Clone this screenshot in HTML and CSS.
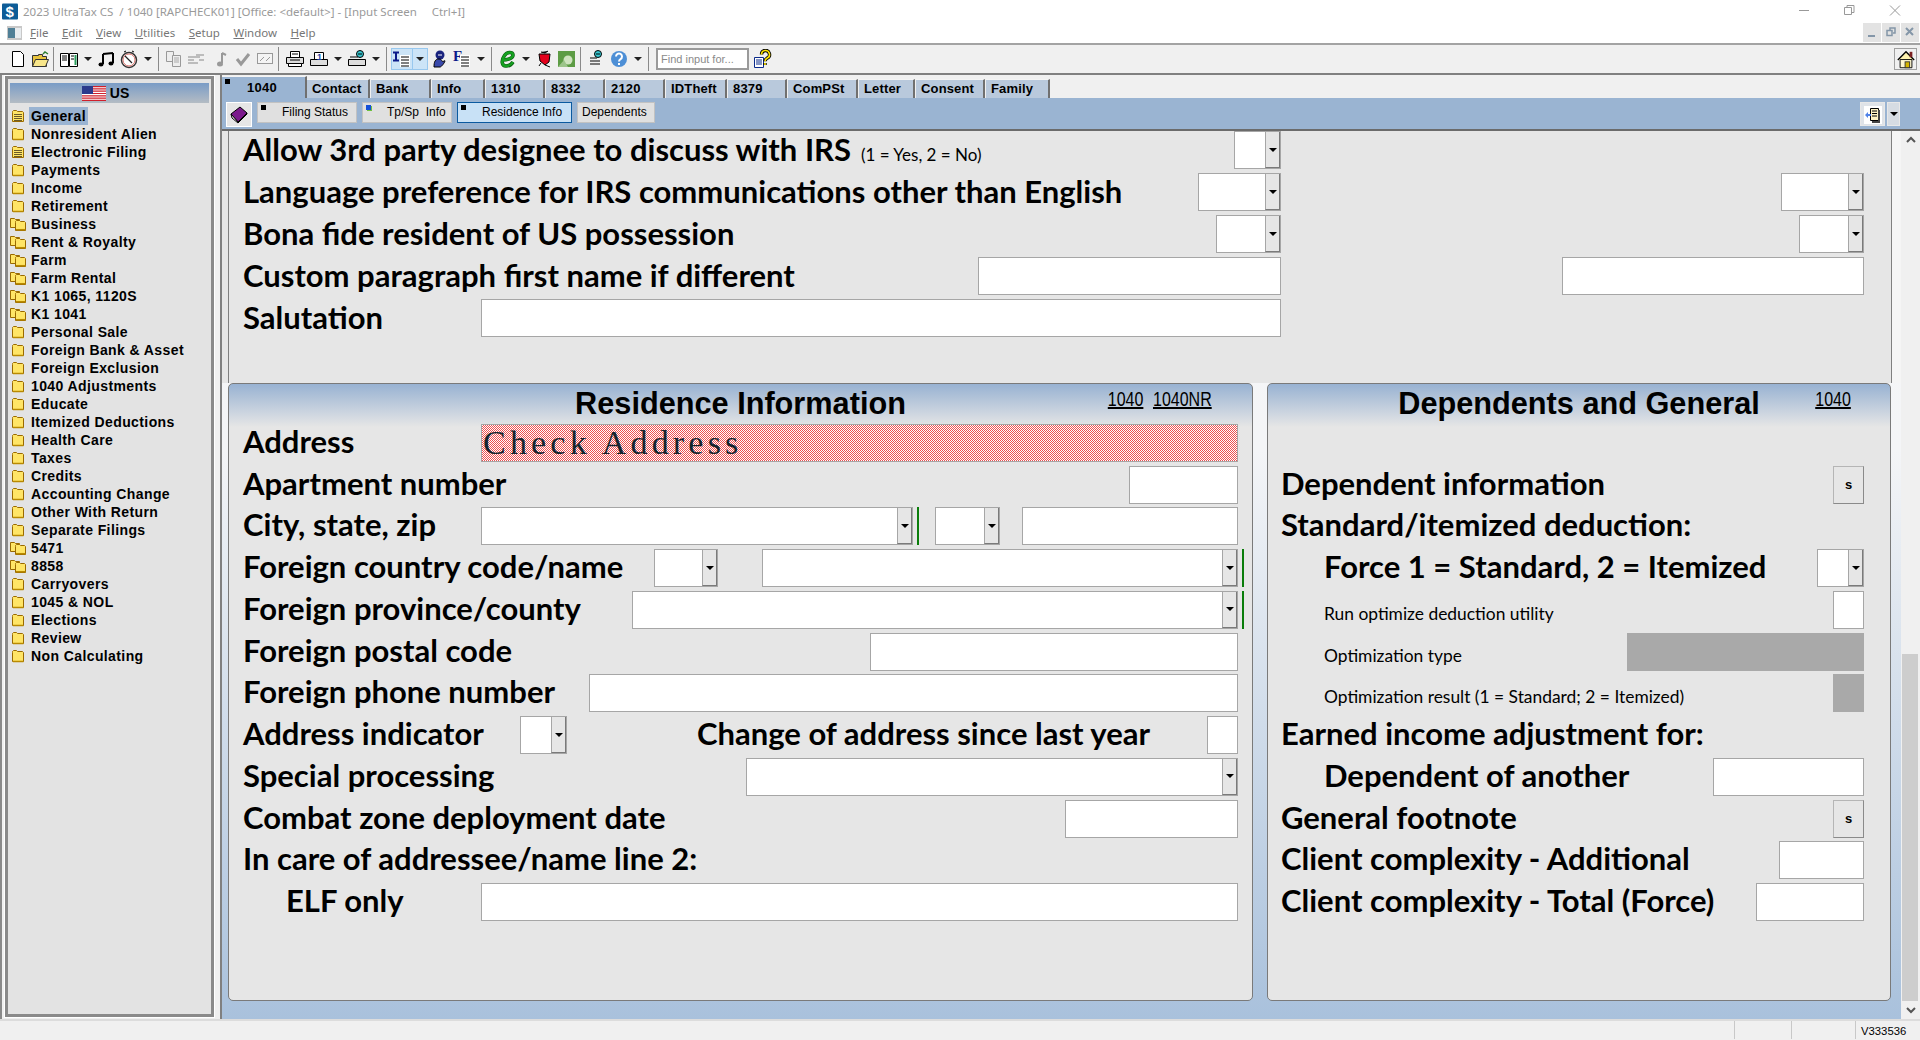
FILE: index.html
```html
<!DOCTYPE html>
<html>
<head>
  <meta charset="UTF-8">
  <title>2023 UltraTax CS</title>
  <link rel="stylesheet" href="styles.css">
</head>
<body>
  <svg class="defs" width="0" height="0">
    <symbol id="folder" viewBox="0 0 17 14">
      <path d="M2.5 3.5v-1l1-1h3l1 1h5l1 1v9h-11z" fill="#ffe566" stroke="#9a6a00"/>
      <path d="M3 12.5h10.500" stroke="#b98a00" stroke-width="1.500"/>
    </symbol>
    <symbol id="folder-doc" viewBox="0 0 17 14">
      <path d="M2.5 3.5v-1l1-1h3l1 1h5l1 1v9h-11z" fill="#ffe566" stroke="#9a6a00"/>
      <path d="M4 5.500h8M4 7.500h8M4 9.500h8M4 11.500h8" stroke="#6b5a2a"/>
    </symbol>
    <symbol id="folders" viewBox="0 0 17 14">
      <path d="M.5 3V1.500h4l1 1h4v8h-9z" fill="#ffe566" stroke="#9a6a00"/>
      <path d="M5.500 5.500v-1l1-1h3l1 1h4l1 1v8h-10z" fill="#ffe566" stroke="#9a6a00"/>
      <path d="M6 12.700h9.500" stroke="#b98a00" stroke-width="1.500"/>
    </symbol>
  </svg>

  <header class="titlebar">
    <svg class="app-logo" viewBox="0 0 16 16" width="16" height="17"><rect width="16" height="16" rx="1" fill="#0d5c97"/><text x="3.500" y="13" class="logo-text">$</text></svg>
    <span class="title-text">2023 UltraTax CS&nbsp; / 1040 [RAPCHECK01] [Office: &lt;default&gt;] - [Input Screen&nbsp; &nbsp; &nbsp;Ctrl+I]</span>
    <div class="win-btns">
      <svg viewBox="0 0 46 22" width="46" height="22"><path d="M19 10.500h10" stroke="#999"/></svg>
      <svg viewBox="0 0 46 22" width="46" height="22"><path d="M18.500 7.500h7v7h-7zM21 7.500v-2h7v7h-2.500" fill="none" stroke="#999"/></svg>
      <svg viewBox="0 0 46 22" width="46" height="22"><path d="M18 5.500l10 10M28 5.500l-10 10" stroke="#999"/></svg>
    </div>
  </header>

  <nav class="menubar">
    <svg class="mdi-icon" viewBox="0 0 15 14" width="15" height="14"><rect width="15" height="14" fill="#c8c8c8"/><rect x="1" y="2" width="7" height="10" fill="#4f7f96"/><rect x="8" y="2" width="6" height="10" fill="#e8ecef"/></svg>
    <div class="menu-items">
      <span><u>F</u>ile</span><span><u>E</u>dit</span><span><u>V</u>iew</span><span><u>U</u>tilities</span><span><u>S</u>etup</span><span><u>W</u>indow</span><span><u>H</u>elp</span>
    </div>
    <div class="mdi-btns">
      <span class="mdi-btn"><svg viewBox="0 0 18 18" width="18" height="18"><path d="M5 13h7" stroke="#8496a8" stroke-width="2"/></svg></span>
      <span class="mdi-btn"><svg viewBox="0 0 18 18" width="18" height="18"><path d="M5 7.500h5v5H5zM8 7V5h5v5h-2" fill="none" stroke="#8496a8" stroke-width="1.500"/></svg></span>
      <span class="mdi-btn"><svg viewBox="0 0 18 18" width="18" height="18"><path d="M5 5l7 7M12 5l-7 7" stroke="#8496a8" stroke-width="2"/></svg></span>
    </div>
  </nav>

  <div class="toolbar">
    <span class="tb"><svg viewBox="0 0 20 20"><path d="M4.500 2.500h8l3 3v12h-11z" fill="#fff" stroke="#000"/></svg></span>
    <span class="tb"><svg viewBox="0 0 20 20"><path d="M2.500 6.500h6v-1h4v2h4v10h-14z" fill="#e8c33d" stroke="#333"/><path d="M2.500 17.500l3-7h13l-3 7z" fill="#f8e68a" stroke="#333"/><path d="M13 5l2-2 3 2" fill="none" stroke="#2e7d32" stroke-width="1.500"/></svg></span>
    <span class="sep"></span>
    <span class="tb"><svg viewBox="0 0 20 20"><path d="M1.500 4.500h8v13h-8zM10.500 4.500h8v13h-8z" fill="#fff" stroke="#000"/><path d="M3 7h5M3 9h5M3 11h5M12 7h3M12 10h3" stroke="#000"/><path d="M16.500 6v10" stroke="#2a9d5c" stroke-width="2"/></svg></span><span class="caret"></span>
    <span class="tb"><svg viewBox="0 0 20 20"><path d="M6 5v10M16 4v10M6 5l10-1" fill="none" stroke="#000" stroke-width="2"/><ellipse cx="4" cy="15.500" rx="2.500" ry="2"/><ellipse cx="14" cy="14.500" rx="2.500" ry="2"/></svg></span>
    <span class="tb"><svg viewBox="0 0 20 20"><circle cx="10" cy="11" r="7.500" fill="#fff" stroke="#333" stroke-width="1.500"/><circle cx="10" cy="11" r="6" fill="none" stroke="#d9716a"/><path d="M10 11L6 7M10 11l3 3" stroke="#222" stroke-width="1.200"/><path d="M5 3l2-1M15 3l-2-1" stroke="#000"/></svg></span><span class="caret"></span>
    <span class="sep"></span>
    <span class="tb"><svg viewBox="0 0 20 20"><path d="M2.500 2.500h7v10h-7z" fill="#eee" stroke="#999"/><path d="M8.500 6.500h8v11h-8z" fill="#eee" stroke="#999"/><path d="M10 9h5M10 11h5M10 13h5" stroke="#aaa"/></svg></span>
    <span class="tb"><svg viewBox="0 0 20 20"><path d="M2 8h12M2 11h6M2 14h10M10 6h8M13 11h5" stroke="#aaa" stroke-width="1.500"/></svg></span>
    <span class="tb ml3"><svg viewBox="0 0 20 20"><path d="M11 4v10" stroke="#999" stroke-width="2"/><path d="M11 4l4 2" stroke="#999" stroke-width="2"/><ellipse cx="9" cy="15" rx="3" ry="2.500" fill="#999"/></svg></span>
    <span class="tb"><svg viewBox="0 0 20 20"><path d="M4 10l4 5 8-10" fill="none" stroke="#999" stroke-width="3"/></svg></span>
    <span class="tb"><svg viewBox="0 0 20 20"><rect x="2.500" y="4.500" width="15" height="10" fill="#f4f4f4" stroke="#999"/><path d="M5 12l4-4M11 12l4-4" stroke="#999"/></svg></span>
    <span class="sep"></span>
    <span class="tb ml1"><svg viewBox="0 0 20 20"><path d="M5.500 2.500h9v6h-9z" fill="#fff" stroke="#000"/><path d="M1.500 8.500h17v6h-17z" fill="#ddd" stroke="#000"/><path d="M3.500 14.500h13v3h-13z" fill="#fff" stroke="#000"/><path d="M7 5h6M5 11h10" stroke="#000"/></svg></span>
    <span class="tb ml2"><svg viewBox="0 0 20 20"><path d="M5.500 3.500h9v9h-9z" fill="#fff" stroke="#000"/><path d="M1.500 10.500h17v6h-17z" fill="#ddd" stroke="#000"/><text x="8" y="11" class="tb-num">1</text></svg></span><span class="caret"></span>
    <span class="tb"><svg viewBox="0 0 20 20"><path d="M1.500 10.500h17v6h-17z" fill="#ddd" stroke="#000"/><path d="M3 8h8" stroke="#000"/><circle cx="13" cy="5" r="3.500" fill="#37c6d0" stroke="#000"/><path d="M11 5h4" stroke="#000"/></svg></span><span class="caret"></span>
    <span class="sep"></span>
    <span class="tb-on"><svg viewBox="0 0 20 20"><path d="M1 3.500h6M4 3.500v8M1 11.500h6" fill="none" stroke="#0b1a8a" stroke-width="2"/><rect x="8" y="6" width="10" height="12" fill="#fff"/><path d="M9 8h8M9 11h8M9 14h8M9 17h8" stroke="#000"/></svg></span><span class="caret caret-on"></span>
    <span class="tb"><svg viewBox="0 0 20 20"><circle cx="11" cy="6" r="4.500" fill="#1a237e"/><path d="M5 18c0-5 1-8 5-8s2 4 5 2-2 6-4 6z" fill="#3949ab" stroke="#000"/><path d="M9 6h4" stroke="#fff"/></svg></span>
    <span class="tb ml1"><svg viewBox="0 0 20 20"><text x="1" y="12" class="tb-letter">F</text><rect x="8" y="6" width="10" height="12" fill="#fff"/><path d="M9 8h8M9 11h8M9 14h8M9 17h8" stroke="#000"/></svg></span><span class="caret"></span>
    <span class="sep"></span>
    <span class="tb"><svg viewBox="0 0 20 20"><path d="M5 11c5 0 11-1.500 11-5 0-3.500-6-3.500-8.500.5C4 11.500 4.500 17 9 17c3 0 5.500-1.500 7-4" fill="none" stroke="#0a5c10" stroke-width="3.600"/><path d="M5 11c5 0 11-1.500 11-5 0-3.500-6-3.500-8.500.5C4 11.500 4.500 17 9 17c3 0 5.500-1.500 7-4" fill="none" stroke="#15a020" stroke-width="2.400"/></svg></span><span class="caret"></span>
    <span class="tb"><svg viewBox="0 0 20 20"><path d="M4 5h11l-1 8-4 3-5-4z" fill="#e3001b" stroke="#000"/><path d="M6 3l4 1 3-2M10 16l5 2M6 14l-2 3" stroke="#000"/></svg></span>
    <span class="tb"><svg viewBox="0 0 20 20"><rect x="1" y="2" width="17" height="16" fill="#5d9c45"/><circle cx="11" cy="11" r="4.500" fill="#cfe3c0"/><path d="M1 18l6-7 4 7z" fill="#9cc48a"/></svg></span>
    <span class="sep"></span>
    <span class="tb ml1"><svg viewBox="0 0 20 20"><path d="M3 9h7M3 12h10M3 15h10" stroke="#000"/><circle cx="11" cy="5" r="3.500" fill="#37c6d0" stroke="#000"/><path d="M9 5h4" stroke="#000"/></svg></span>
    <span class="tb"><svg viewBox="0 0 20 20"><circle cx="10" cy="10" r="8" fill="#4d8fd6"/><path d="M7 7.500a3 3 0 1 1 4.500 2.600c-1 .6-1.500 1-1.500 2.400M10 14v2" fill="none" stroke="#fff" stroke-width="2"/></svg></span><span class="caret"></span>
    <span class="sep"></span>
    <div class="find-input">Find input for...</div>
    <span class="tb tb-last"><svg viewBox="0 0 20 20"><path d="M2.500 8.500h9v10h-9z" fill="#fff" stroke="#0b2a8a"/><path d="M4 11h6M4 13h6M4 15h6" stroke="#0b2a8a"/><path d="M9.500 5.500a4 4 0 1 1 5.500 3.700c-1.500.8-2 1.500-2 3M13 14v2" fill="none" stroke="#000" stroke-width="3.400"/><path d="M9.500 5.500a4 4 0 1 1 5.500 3.700c-1.500.8-2 1.500-2 3M13 14v2" fill="none" stroke="#ffe600" stroke-width="1.600"/></svg></span>
    <span class="home-btn"><svg viewBox="0 0 22 22" width="22" height="20"><path d="M2 11L11 2l9 9" fill="#fff3b0" stroke="#000" stroke-width="1.500"/><path d="M4.500 10.500h13v9h-13z" fill="#fff8d0" stroke="#000"/><rect x="15" y="2" width="3" height="6" fill="#7b1f1f"/><rect x="10" y="13" width="5" height="6.500" fill="#d4b400" stroke="#333"/></svg></span>
  </div>

  <div class="main">
    <aside class="sidebar">
      <div class="side-frame">
        <div class="side-head">
          <svg viewBox="0 0 24 15" width="24" height="15"><rect width="24" height="15" fill="#fff"/><path d="M0 .6h24M0 2.900h24M0 5.200h24M0 7.500h24M0 9.800h24M0 12.100h24M0 14.400h24" stroke="#d0202c" stroke-width="1.200"/><rect width="11" height="8" fill="#2b3a8c"/></svg>
          <span>US</span>
        </div>
        <ul class="tree">
          <li><svg><use href="#folder-doc"/></svg><span class="sel">General</span></li>
          <li><svg><use href="#folder"/></svg><span>Nonresident Alien</span></li>
          <li><svg><use href="#folder-doc"/></svg><span>Electronic Filing</span></li>
          <li><svg><use href="#folder"/></svg><span>Payments</span></li>
          <li><svg><use href="#folder"/></svg><span>Income</span></li>
          <li><svg><use href="#folder"/></svg><span>Retirement</span></li>
          <li><svg><use href="#folders"/></svg><span>Business</span></li>
          <li><svg><use href="#folders"/></svg><span>Rent &amp; Royalty</span></li>
          <li><svg><use href="#folders"/></svg><span>Farm</span></li>
          <li><svg><use href="#folders"/></svg><span>Farm Rental</span></li>
          <li><svg><use href="#folders"/></svg><span>K1 1065, 1120S</span></li>
          <li><svg><use href="#folders"/></svg><span>K1 1041</span></li>
          <li><svg><use href="#folder"/></svg><span>Personal Sale</span></li>
          <li><svg><use href="#folder"/></svg><span>Foreign Bank &amp; Asset</span></li>
          <li><svg><use href="#folder"/></svg><span>Foreign Exclusion</span></li>
          <li><svg><use href="#folder"/></svg><span>1040 Adjustments</span></li>
          <li><svg><use href="#folder"/></svg><span>Educate</span></li>
          <li><svg><use href="#folder"/></svg><span>Itemized Deductions</span></li>
          <li><svg><use href="#folder"/></svg><span>Health Care</span></li>
          <li><svg><use href="#folder"/></svg><span>Taxes</span></li>
          <li><svg><use href="#folder"/></svg><span>Credits</span></li>
          <li><svg><use href="#folder"/></svg><span>Accounting Change</span></li>
          <li><svg><use href="#folder"/></svg><span>Other With Return</span></li>
          <li><svg><use href="#folder"/></svg><span>Separate Filings</span></li>
          <li><svg><use href="#folders"/></svg><span>5471</span></li>
          <li><svg><use href="#folders"/></svg><span>8858</span></li>
          <li><svg><use href="#folder"/></svg><span>Carryovers</span></li>
          <li><svg><use href="#folder"/></svg><span>1045 &amp; NOL</span></li>
          <li><svg><use href="#folder"/></svg><span>Elections</span></li>
          <li><svg><use href="#folder"/></svg><span>Review</span></li>
          <li><svg><use href="#folder"/></svg><span>Non Calculating</span></li>
        </ul>
      </div>
    </aside>

    <section class="content">
      <div class="tabs">
        <div class="tab tab-active"><i class="mark"></i>1040</div>
        <div class="tab t-contact">Contact</div>
        <div class="tab t-bank">Bank</div>
        <div class="tab t-info">Info</div>
        <div class="tab t-form">1310</div>
        <div class="tab t-form">8332</div>
        <div class="tab t-form">2120</div>
        <div class="tab t-idtheft">IDTheft</div>
        <div class="tab t-form">8379</div>
        <div class="tab t-compst">ComPSt</div>
        <div class="tab t-letter">Letter</div>
        <div class="tab t-consent">Consent</div>
        <div class="tab t-family">Family</div>
      </div>
      <div class="strip">
        <span class="book-btn"><svg viewBox="0 0 20 20" width="20" height="20"><path d="M2 9l9-7 7 6-9 9z" fill="#7b1a8c" stroke="#000"/><path d="M2 9l1 4 6 5 9-9v-1l-9 9z" fill="#fff" stroke="#000"/></svg></span>
        <div class="sub sub-filing"><i class="mark"></i>Filing Status</div>
        <div class="sub sub-tpsp"><i class="mark mark-blue"></i>Tp/Sp&nbsp; Info</div>
        <div class="sub sub-res sub-active"><i class="mark"></i>Residence Info</div>
        <div class="sub sub-dep">Dependents</div>
        <div class="strip-right">
          <span class="doc-btn"><svg viewBox="0 0 18 18" width="18" height="18"><rect width="18" height="18" fill="#fff"/><path d="M6.500 2.500h8v12h-8z" fill="#fff3c4" stroke="#000"/><path d="M8 5h5M8 7.500h5M8 10h5" stroke="#000"/><path d="M15 4v12H8" fill="none" stroke="#444" stroke-width="2"/><path d="M1 9l3-3v2h3v2H4v2z" fill="#4f82e8"/></svg></span>
          <span class="doc-drop"><i class="tri"></i></span>
        </div>
      </div>

      <div class="sheet">
        <div class="pane">
          <div class="upper">
            <div class="upper-box">
              <div class="up-row">
                <div class="up-left">
                  <span class="lbl">Allow 3rd party designee to discuss with IRS</span><span class="note">(1 = Yes, 2 = No)</span>
                  <div class="combo w47 push"><i class="fill"></i><span class="arrow"><i class="tri"></i></span></div>
                </div>
              </div>
              <div class="up-row">
                <div class="up-left">
                  <span class="lbl">Language preference for IRS communications other than English</span>
                  <div class="combo w83 push"><i class="fill"></i><span class="arrow"><i class="tri"></i></span></div>
                </div>
                <div class="up-right"><div class="combo w83"><i class="fill"></i><span class="arrow"><i class="tri"></i></span></div></div>
              </div>
              <div class="up-row">
                <div class="up-left">
                  <span class="lbl">Bona fide resident of US possession</span>
                  <div class="combo w65 push"><i class="fill"></i><span class="arrow"><i class="tri"></i></span></div>
                </div>
                <div class="up-right"><div class="combo w65"><i class="fill"></i><span class="arrow"><i class="tri"></i></span></div></div>
              </div>
              <div class="up-row">
                <div class="up-left">
                  <span class="lbl">Custom paragraph first name if different</span>
                  <div class="field w303 push"></div>
                </div>
                <div class="up-right"><div class="field w302"></div></div>
              </div>
              <div class="up-row">
                <div class="up-left">
                  <span class="lbl">Salutation</span>
                  <div class="field w800 push"></div>
                </div>
              </div>
            </div>
          </div>

          <div class="panels">
            <section class="panel panel-res">
              <div class="panel-head">
                <span></span>
                <h2>Residence Information</h2>
                <div class="links"><a>1040</a><a>1040NR</a></div>
              </div>
              <div class="row"><span class="lbl">Address</span><div class="field field-alert w757 push">Check Address</div></div>
              <div class="row"><span class="lbl">Apartment number</span><div class="field w109 push"></div></div>
              <div class="row">
                <span class="lbl lbl-city">City, state, zip</span>
                <div class="combo w432"><i class="fill"></i><span class="arrow"><i class="tri"></i></span></div>
                <i class="green"></i>
                <div class="combo w65 ml16"><i class="fill"></i><span class="arrow"><i class="tri"></i></span></div>
                <div class="field w216 push"></div>
              </div>
              <div class="row">
                <span class="lbl lbl-country">Foreign country code/name</span>
                <div class="combo w64"><i class="fill"></i><span class="arrow"><i class="tri"></i></span></div>
                <div class="combo w476 push"><i class="fill"></i><span class="arrow"><i class="tri"></i></span></div>
                <i class="green green-out"></i>
              </div>
              <div class="row">
                <span class="lbl">Foreign province/county</span>
                <div class="combo w606 push"><i class="fill"></i><span class="arrow"><i class="tri"></i></span></div>
                <i class="green green-out"></i>
              </div>
              <div class="row"><span class="lbl">Foreign postal code</span><div class="field w368 push"></div></div>
              <div class="row"><span class="lbl">Foreign phone number</span><div class="field w649 push"></div></div>
              <div class="row">
                <span class="lbl lbl-indicator">Address indicator</span>
                <div class="combo w47"><i class="fill"></i><span class="arrow"><i class="tri"></i></span></div>
                <span class="lbl lbl-change">Change of address since last year</span>
                <div class="field w31 push"></div>
              </div>
              <div class="row"><span class="lbl">Special processing</span><div class="combo w492 push"><i class="fill"></i><span class="arrow"><i class="tri"></i></span></div></div>
              <div class="row"><span class="lbl">Combat zone deployment date</span><div class="field w173 push"></div></div>
              <div class="row"><span class="lbl">In care of addressee/name line 2:</span></div>
              <div class="row"><span class="lbl lbl-in">ELF only</span><div class="field w757 push"></div></div>
            </section>

            <section class="panel panel-dep">
              <div class="panel-head">
                <span></span>
                <h2>Dependents and General</h2>
                <div class="links"><a>1040</a></div>
              </div>
              <div class="row"></div>
              <div class="row"><span class="lbl">Dependent information</span><div class="s-btn push">s</div></div>
              <div class="row"><span class="lbl">Standard/itemized deduction:</span></div>
              <div class="row"><span class="lbl lbl-in">Force 1 = Standard, 2 = Itemized</span><div class="combo w47 push"><i class="fill"></i><span class="arrow"><i class="tri"></i></span></div></div>
              <div class="row"><span class="lbl-small">Run optimize deduction utility</span><div class="field w31 push"></div></div>
              <div class="row"><span class="lbl-small">Optimization type</span><div class="field field-off w237 push"></div></div>
              <div class="row"><span class="lbl-small">Optimization result (1 = Standard; 2 = Itemized)</span><div class="field field-off w31 push"></div></div>
              <div class="row"><span class="lbl">Earned income adjustment for:</span></div>
              <div class="row"><span class="lbl lbl-in">Dependent of another</span><div class="field w151 push"></div></div>
              <div class="row"><span class="lbl">General footnote</span><div class="s-btn push">s</div></div>
              <div class="row"><span class="lbl">Client complexity - Additional</span><div class="field w85 push"></div></div>
              <div class="row"><span class="lbl">Client complexity - Total (Force)</span><div class="field w108 push"></div></div>
            </section>
          </div>
        </div>

        <div class="vscroll">
          <span class="sb-btn"><svg viewBox="0 0 12 8" width="12" height="8"><path d="M2 6l4-4 4 4" fill="none" stroke="#555" stroke-width="2"/></svg></span>
          <div class="sb-track"><div class="sb-thumb"></div></div>
          <span class="sb-btn"><svg viewBox="0 0 12 8" width="12" height="8"><path d="M2 2l4 4 4-4" fill="none" stroke="#555" stroke-width="2"/></svg></span>
        </div>
      </div>
    </section>
  </div>

  <footer class="statusbar">
    <span class="st-cell st-a"></span>
    <span class="st-cell st-b"></span>
    <span class="st-cell st-c">V333536</span>
  </footer>
</body>
</html>
```

FILE: styles.css
```css
* {
  box-sizing: border-box;
}

html, body {
  margin: 0;
  height: 1040px;
  overflow: hidden;
}

body {
  display: flex;
  flex-direction: column;
  font-family: "Liberation Sans", Arial, sans-serif;
  background-color: #f0f0f0;
  color: #000;
}

.defs {
  position: absolute;
}

/* title and menu */
.titlebar {
  display: flex;
  align-items: center;
  height: 22px;
  background-color: #fff;
}

.app-logo {
  margin: 0 5px 0 2px;
}

.logo-text {
  font: bold 15px "Liberation Sans", sans-serif;
  fill: #fff;
}

.title-text {
  font: 11.500px "Noto Sans", sans-serif;
  color: #9a9a9a;
}

.win-btns {
  display: flex;
  margin-left: auto;
  margin-right: 2px;
}

.win-btns svg {
  display: block;
}

.menubar {
  display: flex;
  align-items: center;
  height: 21px;
  background-color: #fff;
  padding-left: 7px;
}

.menu-items {
  display: flex;
  gap: 13.500px;
  margin-left: 8px;
  font: 11.500px "Noto Sans", sans-serif;
  color: #767676;
}

.mdi-btns {
  display: flex;
  gap: 1px;
  margin-left: auto;
  margin-right: 1px;
}

.mdi-btn {
  width: 18px;
  height: 19px;
  background-color: #e3e3e3;
}

.mdi-btn svg {
  display: block;
}

/* toolbar */
.toolbar {
  display: flex;
  align-items: center;
  height: 32px;
  padding-left: 7px;
  border-top: 2px solid #a3a3a3;
  border-bottom: 2px solid #808080;
}

.tb {
  display: flex;
  justify-content: center;
  width: 22px;
  flex: none;
}

.tb svg, .tb-on svg {
  width: 20px;
  height: 20px;
}

.ml1 { margin-left: 1px; }
.ml2 { margin-left: 2px; }
.ml3 { margin-left: 3px; }

.tb-on {
  display: flex;
  justify-content: center;
  align-items: center;
  width: 22px;
  height: 22px;
  background-color: #cce4f7;
  border: 1px solid #99c8ee;
}

.caret {
  display: flex;
  justify-content: center;
  width: 16px;
  flex: none;
}

.caret::after {
  content: "";
  border-left: 4px solid transparent;
  border-right: 4px solid transparent;
  border-top: 4px solid #222;
}

.caret-on {
  align-items: center;
  width: 15px;
  height: 22px;
  background-color: #cce4f7;
  border: 1px solid #99c8ee;
  border-left: none;
}

.sep {
  width: 1px;
  height: 24px;
  background-color: #8a8a8a;
  margin: 0 4px 0 2px;
  flex: none;
}

.tb-letter {
  font: bold 15px "Liberation Serif", serif;
  fill: #0b1a8a;
}

.tb-num {
  font: bold 9px "Liberation Sans", sans-serif;
  fill: #1a3fa0;
}

.find-input {
  width: 93px;
  height: 22px;
  margin-left: 3px;
  padding: 2px 3px;
  background-color: #fff;
  border: 2px solid #9a9a9a;
  font: 11px "Liberation Sans", sans-serif;
  line-height: 14px;
  color: #8a8a8a;
  white-space: nowrap;
  flex: none;
}

.tb-last {
  margin-left: 2px;
}

.home-btn {
  margin-left: auto;
  margin-right: 3px;
  width: 23px;
  height: 22px;
  padding-top: 1px;
  background-color: #f0f0f0;
  border: 1px solid #a0a0a0;
}

.home-btn svg {
  display: block;
}

/* main area */
.main {
  display: flex;
  height: 944px;
}

.sidebar {
  width: 220px;
  flex: none;
  padding: 0 5px 0 2px;
  border-left: 2px solid #8a8a8a;
}

.side-frame {
  height: 943px;
  background-color: #e3e3e3;
  border: 1px solid #fff;
  box-shadow: 0 0 0 3px #8a8a8a inset;
  padding: 7px 5px 0 5px;
}

.side-head {
  display: flex;
  justify-content: center;
  align-items: center;
  gap: 4px;
  height: 20px;
  margin-bottom: 4px;
  padding-right: 8px;
  background: linear-gradient(#7a9cc6, #b4bcc4);
  font-weight: bold;
  font-size: 14px;
}

.tree {
  list-style: none;
  margin: 0;
  padding: 0;
}

.tree li {
  display: flex;
  align-items: center;
  height: 18px;
  font-size: 14px;
  font-weight: bold;
  letter-spacing: .4px;
}

.tree svg {
  width: 17px;
  height: 14px;
  margin-right: 2px;
  flex: none;
}

.tree span {
  padding: 0 2px;
  line-height: 18px;
}

.tree .sel {
  background-color: #9ab4d2;
}

.content {
  flex: 1;
  display: flex;
  flex-direction: column;
  min-width: 0;
  border-left: 2px solid #808080;
}

/* tabs */
.tabs {
  display: flex;
  align-items: flex-end;
  height: 23px;
}

.tab {
  height: 19px;
  padding-left: 5px;
  margin-right: 1px;
  background-color: #b9c9dc;
  border-top: 1px solid #f4f4f4;
  border-right: 2px solid #707070;
  font-size: 13px;
  font-weight: bold;
  letter-spacing: .15px;
  line-height: 18px;
}

.tab-active {
  position: relative;
  width: 85px;
  height: 22px;
  margin-right: 0;
  padding-left: 25px;
  background-color: #9ab4d2;
  line-height: 22px;
  letter-spacing: .3px;
}

.mark {
  position: absolute;
  top: 2px;
  left: 3px;
  width: 5px;
  height: 5px;
  background-color: #000;
}

.mark-blue {
  background-color: #1450d8;
  box-shadow: 1px 1px 0 #6fbf40;
}

.t-contact { width: 63px; }
.t-bank { width: 60px; }
.t-info { width: 53px; }
.t-form { width: 59px; }
.t-idtheft { width: 61px; }
.t-compst { width: 70px; }
.t-letter { width: 56px; }
.t-consent { width: 69px; }
.t-family { width: 64px; }

.strip {
  display: flex;
  align-items: flex-start;
  height: 33px;
  padding: 4px 0 0 4px;
  background-color: #9ab4d2;
  border-bottom: 2px solid #6b6b6b;
}

.book-btn {
  width: 26px;
  height: 25px;
  padding: 2px;
  margin-right: 5px;
  background-color: #e6e6e6;
  border: 1px solid #fff;
}

.book-btn svg {
  display: block;
}

.sub {
  position: relative;
  height: 21px;
  margin-right: 5px;
  background-color: #e0e0e0;
  border: 1px solid #c2c2c2;
  font-size: 12px;
  line-height: 19px;
  white-space: nowrap;
}

.sub-filing { width: 100px; padding-left: 24px; }
.sub-tpsp { width: 90px; padding-left: 24px; }
.sub-res { width: 115px; padding-left: 24px; }
.sub-dep { width: 78px; padding-left: 4px; }

.sub-active {
  background-color: #c8e1f6;
  border-color: #0a5aa0;
}

.strip-right {
  display: flex;
  gap: 2px;
  margin-left: auto;
  margin-right: 20px;
}

.doc-btn {
  width: 25px;
  height: 24px;
  padding: 3px;
  background-color: #dfe3e8;
  border: 1px solid #e8e8e8;
}

.doc-btn svg {
  display: block;
}

.doc-drop {
  display: flex;
  justify-content: center;
  align-items: center;
  width: 13px;
  height: 24px;
  background-color: #d6dce3;
  border: 1px solid #e8e8e8;
}

.sheet {
  display: flex;
  flex: 1;
  min-height: 0;
}

.pane {
  flex: 1;
  min-width: 0;
  background: linear-gradient(#f6f6f6 0, #f4f5f7 36%, #a9c1dc 100%);
}

/* upper part */
.upper {
  height: 252px;
  padding-left: 6px;
  padding-right: 9px;
  background: linear-gradient(90deg, #e6e6e6 1000px, #f5f5f5 1000px);
}

.upper-box {
  height: 252px;
  width: 1664px;
  padding-left: 14px;
  background-color: #e6e6e6;
  border-left: 1px solid #7f7f7f;
  border-right: 1px solid #7f7f7f;
}

.up-row {
  display: flex;
  height: 42px;
}

.up-left {
  display: flex;
  width: 1038px;
  flex: none;
}

.up-right {
  display: flex;
  justify-content: flex-end;
  width: 583px;
  flex: none;
}

.up-row .lbl {
  padding-bottom: 2px;
  line-height: 37px;
}

.note {
  margin-left: 10px;
  font: 17px Lato, sans-serif;
  line-height: 47px;
}

/* panels */
.panels {
  display: flex;
  gap: 14px;
  padding-left: 6px;
}

.panel {
  height: 618px;
  background: linear-gradient(#98b2d2 0, #e6e6e6 43px);
  border: 1px solid #7a7a7a;
  border-radius: 5px;
}

.panel-res {
  width: 1025px;
  padding: 0 14px;
}

.panel-dep {
  width: 624px;
  padding: 0 26px 0 13px;
}

.panel-head {
  display: grid;
  grid-template-columns: 1fr auto 1fr;
  height: 38px;
}

.panel-dep .panel-head {
  margin-right: -13px;
}

.panel-head h2 {
  margin: 0;
  font-size: 30.700px;
  line-height: 39px;
  font-weight: bold;
  white-space: nowrap;
}

.links {
  display: flex;
  justify-content: flex-end;
  gap: 12px;
  padding-right: 33px;
  font-size: 20px;
  line-height: 31px;
  transform: scaleX(.8);
  transform-origin: right center;
}

.links a {
  text-decoration: underline;
}

.row {
  display: flex;
  align-items: center;
  height: 41.750px;
}

.lbl {
  padding-bottom: 4px;
  font: bold 31px Lato, sans-serif;
  white-space: nowrap;
}

.lbl-small {
  margin-left: 43px;
  padding-top: 7px;
  font: 17.400px Lato, sans-serif;
  white-space: nowrap;
}

.lbl-in {
  margin-left: 43px;
}

.lbl-city { width: 238px; }
.lbl-country { width: 411px; }
.lbl-indicator { width: 277px; }
.lbl-change { margin-left: 130px; }

.push {
  margin-left: auto;
}

.ml16 {
  margin-left: 16px;
}

/* fields */
.field {
  height: 38px;
  flex: none;
  background-color: #fff;
  border: 1px solid #a6a6a6;
}

.field-alert {
  padding-left: 1px;
  background: repeating-conic-gradient(#ee5050 0 25%, #fff 0 50%) 0 0 / 2px 2px;
  font: 34px "Liberation Serif", serif;
  letter-spacing: 4.200px;
  line-height: 36px;
  color: #14242e;
}

.field-off {
  background-color: #a9a9a9;
  border-color: #a9a9a9;
}

.combo {
  display: flex;
  height: 38px;
  flex: none;
  background-color: #fff;
  border: 1px solid #a6a6a6;
}

.fill {
  flex: 1;
}

.arrow {
  display: flex;
  justify-content: center;
  align-items: center;
  width: 15px;
  background-color: #e6e6e6;
  border-left: 1px solid #a6a6a6;
  border-right: 1px solid #7a7a7a;
  border-bottom: 1px solid #7a7a7a;
}

.tri {
  width: 0;
  height: 0;
  border-left: 4px solid transparent;
  border-right: 4px solid transparent;
  border-top: 4px solid #000;
}

.green {
  width: 2px;
  height: 38px;
  margin-left: 4px;
  background-color: #0a7d0a;
  flex: none;
}

.green-out {
  margin-right: -6px;
}

.s-btn {
  width: 31px;
  height: 38px;
  background-color: #e6e6e6;
  border: 1px solid #b5b5b5;
  border-right-color: #8a8a8a;
  border-bottom-color: #8a8a8a;
  font-size: 13px;
  font-weight: bold;
  line-height: 36px;
  text-align: center;
}

.w31 { width: 31px; }
.w47 { width: 47px; }
.w64 { width: 64px; }
.w65 { width: 65px; }
.w83 { width: 83px; }
.w85 { width: 85px; }
.w108 { width: 108px; }
.w109 { width: 109px; }
.w151 { width: 151px; }
.w173 { width: 173px; }
.w216 { width: 216px; }
.w237 { width: 237px; }
.w302 { width: 302px; }
.w303 { width: 303px; }
.w368 { width: 368px; }
.w432 { width: 432px; }
.w476 { width: 476px; }
.w492 { width: 492px; }
.w606 { width: 606px; }
.w649 { width: 649px; }
.w757 { width: 757px; }
.w800 { width: 800px; }

/* scrollbar */
.vscroll {
  display: flex;
  flex-direction: column;
  width: 19px;
  flex: none;
  background-color: #f0f0f0;
}

.sb-btn {
  display: flex;
  justify-content: center;
  align-items: center;
  height: 18px;
  flex: none;
}

.sb-track {
  display: flex;
  flex: 1;
  flex-direction: column;
  justify-content: flex-end;
}

.sb-thumb {
  height: 347px;
  margin: 0 2px 0 1px;
  background-color: #cdcdcd;
}

/* status bar */
.statusbar {
  display: flex;
  justify-content: flex-end;
  height: 20px;
  border-top: 2px solid #dcdcdc;
}

.st-cell {
  border-left: 1px solid #c8c8c8;
  font-size: 11.300px;
  line-height: 21px;
  padding-left: 5px;
}

.st-a { width: 57px; }
.st-b { width: 64px; }
.st-c { width: 65px; }
```
